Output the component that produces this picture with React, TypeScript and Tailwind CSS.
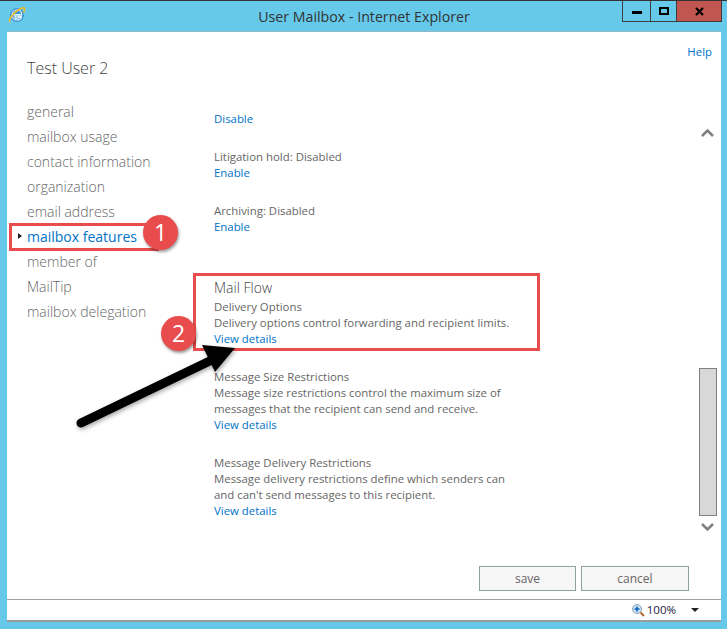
import React from "react";

const F = { fontFamily: '"Open Sans","Noto Sans","Liberation Sans",sans-serif' };

function Link({ children }: { children: React.ReactNode }) {
  return <div className="text-[#0072c6]">{children}</div>;
}

function Block({ lines, link, className = "" }: { lines: string[]; link: string; className?: string }) {
  return (
    <div className={className}>
      {lines.map((l) => (
        <div key={l}>{l}</div>
      ))}
      <Link>{link}</Link>
    </div>
  );
}

function IEIcon() {
  return (
    <svg width="18" height="18" viewBox="0 0 18 18" fill="none">
      <circle cx="9" cy="9" r="7" fill="#3f97d8" />
      <path d="M4.5 8.6h9.2C13.7 5.8 11.6 4 9 4 6.2 4 4.2 6.1 4.2 9s2.1 5 4.8 5c2 0 3.6-1 4.4-2.6h-2.7c-.4.6-1 1-1.7 1-1.2 0-2-1-2.1-2.3h7" stroke="#dff1fb" strokeWidth="1.2" />
      <path d="M1.8 15.6C.4 13.6 6 5 15 1.8c2.4-.6 1.7 2 .8 4.2" stroke="#f2b71d" strokeWidth="1.5" strokeLinecap="round" />
    </svg>
  );
}

export default function App() {
  const nav = ["general", "mailbox usage", "contact information", "organization", "email address", "mailbox features", "member of", "MailTip", "mailbox delegation"];
  return (
    <div style={F} className="relative w-[727px] h-[629px] overflow-hidden bg-[#66c9ea] flex flex-col border-t border-[#333333] text-[#666666] text-[11.4px] leading-[16px]">
      {/* title bar */}
      <div className="h-[30px] shrink-0 flex items-start pt-[6px] text-[14.2px] leading-[19px] text-[#333333]">
        <div className="w-[8px] shrink-0" />
        <div className="-mt-[1px] shrink-0"><IEIcon /></div>
        <div className="w-[596px] shrink-0 pl-[80px] text-center">User Mailbox - Internet Explorer</div>
        <div className="-mt-[6px] flex h-[21px] w-[100px] shrink-0 border border-t-0 border-[#3c3c3c]">
          <div className="w-[28px] border-r border-[#3c3c3c] flex items-center justify-center">
            <div className="w-[10px] h-[3px] bg-black mt-[3px]" />
          </div>
          <div className="w-[26px] border-r border-[#3c3c3c] flex items-center justify-center">
            <div className="w-[10px] h-[8px] border-2 border-black mb-[1px]" />
          </div>
          <div className="flex-1 bg-[#c0564f] flex items-center justify-center">
            <svg width="9" height="9" viewBox="0 0 9 9"><path d="M1 1l7 7M8 1l-7 7" stroke="#000" strokeWidth="2.2" /></svg>
          </div>
        </div>
      </div>

      {/* window body */}
      <div className="ml-[7px] mr-[6px] h-[568px] shrink-0 bg-white border-t border-[#8fb7c7] flex flex-col">
        <div className="h-[533px] shrink-0 flex">
          {/* sidebar */}
          <div className="w-[207px] shrink-0 pl-[20px]">
            <div className="mt-[24px] text-[16px] leading-[24px] font-light text-[#444444]">Test User 2</div>
            <div className="mt-[19px] text-[14px] leading-[25px] font-light text-[#666666]">
              {nav.map((n) => (
                <div key={n} className={n === "mailbox features" ? "relative font-normal text-[#0072c6]" : ""}>
                  {n === "mailbox features" && (
                    <span className="absolute left-[-9px] top-[9px] w-0 h-0 border-y-[3.5px] border-y-transparent border-l-[4px] border-l-[#222222]" />
                  )}
                  {n}
                </div>
              ))}
            </div>
          </div>

          {/* content */}
          <div className="w-[340px] shrink-0 pt-[79px]">
            <Link>Disable</Link>
            <Block className="mt-[22px]" lines={["Litigation hold: Disabled"]} link="Enable" />
            <Block className="mt-[22px]" lines={["Archiving: Disabled"]} link="Enable" />
            <div className="mt-[42px] text-[14px] leading-[22px] font-light text-[#444444]">Mail Flow</div>
            <Block lines={["Delivery Options", "Delivery options control forwarding and recipient limits."]} link="View details" />
            <Block className="mt-[22px]" lines={["Message Size Restrictions", "Message size restrictions control the maximum size of", "messages that the recipient can send and receive."]} link="View details" />
            <Block className="mt-[22px]" lines={["Message Delivery Restrictions", "Message delivery restrictions define which senders can", "and can't send messages to this recipient."]} link="View details" />
          </div>

          {/* help and scrollbar */}
          <div className="flex-1 pt-[12px]">
            <div className="text-right pr-[9px] text-[#0072c6]">Help</div>
            <svg className="block ml-[146px] mt-[67px]" width="15" height="12" viewBox="0 0 15 12" fill="none">
              <path d="M2 9l5.5-5.5L13 9" stroke="#808080" strokeWidth="2.6" />
            </svg>
            <div className="ml-[145px] mt-[229px] w-[18px] h-[148px] bg-[#d8d8d8] border border-[#808080]" />
            <svg className="block ml-[146px] mt-[5px]" width="15" height="12" viewBox="0 0 15 12" fill="none">
              <path d="M2 3l5.5 5.5L13 3" stroke="#808080" strokeWidth="2.6" />
            </svg>
          </div>
        </div>

        {/* dialog buttons */}
        <div className="flex justify-end gap-[5px] pr-[32px] pt-[1px] text-[12px] text-[#666666]">
          <div className="w-[97px] h-[25px] bg-[#f6f6f6] border border-[#8fa0a0] flex items-center justify-center">save</div>
          <div className="w-[108px] h-[25px] bg-[#f6f6f6] border border-[#8fa0a0] flex items-center justify-center">cancel</div>
        </div>
      </div>

      {/* status bar */}
      <div className="ml-[7px] mr-[6px] h-[23px] shrink-0 bg-white border-t border-[#a0a0a0] border-b-2 border-b-[#9a9a9a] flex items-center justify-end pr-[22px] text-[#1a1a40] text-[11.5px]">
        <svg width="14" height="14" viewBox="0 0 14 14" fill="none" className="mr-[2px]">
          <circle cx="6" cy="6" r="4.5" fill="#cfe2f3" stroke="#8aa0b8" />
          <path d="M6 3.5v5M3.5 6h5" stroke="#0a5fc0" strokeWidth="1.6" />
          <path d="M9.5 9.5l3.5 3.5" stroke="#a8692f" strokeWidth="2" />
        </svg>
        <span>100%</span>
        <span className="ml-[15px] w-0 h-0 border-x-[4px] border-x-transparent border-t-[4px] border-t-[#222222]" />
      </div>

      {/* annotations */}
      <div className="absolute left-[9px] top-[222px] w-[150px] h-[28px] border-[3px] border-[#e84c4c]" />
      <div className="absolute left-[193px] top-[272px] w-[347px] h-[78px] border-[3px] border-[#e84c4c]" />
      <svg className="absolute left-0 top-[-1px] drop-shadow-[1px_2px_2px_rgba(0,0,0,0.35)]" width="727" height="629" fill="none">
        <path d="M81 423L218 357" stroke="#000" strokeWidth="9" strokeLinecap="round" />
        <path d="M202 345L235 348L215 372Z" fill="#000" />
      </svg>
      <div className="absolute left-[143px] top-[214px] w-[35px] h-[35px] rounded-full bg-[#e84c4c] text-white text-[23px] leading-[35px] text-center shadow-[1px_2px_3px_rgba(0,0,0,0.4)]">1</div>
      <div className="absolute left-[161px] top-[315px] w-[35px] h-[35px] rounded-full bg-[#e84c4c] text-white text-[23px] leading-[35px] text-center shadow-[1px_2px_3px_rgba(0,0,0,0.4)]">2</div>
    </div>
  );
}
